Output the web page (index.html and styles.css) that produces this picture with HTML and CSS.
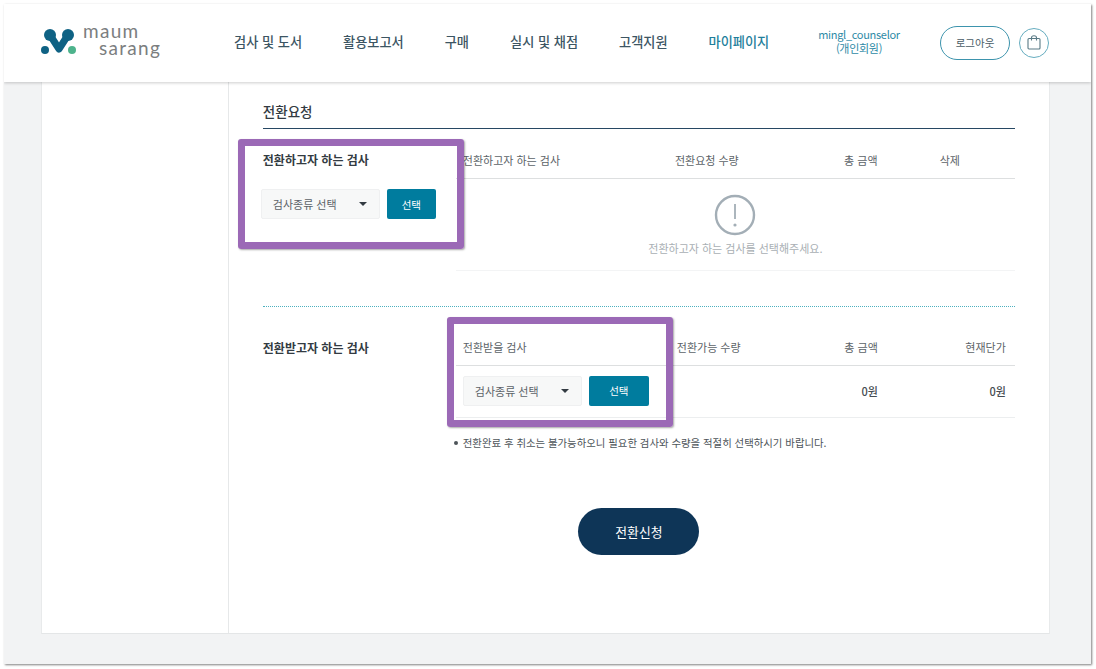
FILE: index.html
```html
<!DOCTYPE html>
<html lang="ko">
<head>
    <meta charset="utf-8">
    <title>전환요청</title>
    <link rel="stylesheet" href="styles.css">
</head>
<body>
    <div class="window">
        <header class="header">
            <a class="logo">
                <svg class="logo-mark" width="36" height="28" viewBox="0 0 36 28">
                    <path d="M10 6 L19 20 L28 6" fill="none" stroke="#0f6284" stroke-width="7" stroke-linecap="round" stroke-linejoin="round"/>
                    <circle cx="10" cy="6" r="6" fill="#0f6284"/>
                    <circle cx="28" cy="6" r="6" fill="#0f6284"/>
                    <circle cx="5" cy="21" r="4" fill="#0f6284"/>
                    <circle cx="32" cy="21" r="4" fill="#4db38c"/>
                </svg>
                <div class="logo-text">
                    <div>maum</div>
                    <div class="logo-second">sarang</div>
                </div>
            </a>
            <nav class="nav">
                <a>검사 및 도서</a>
                <a>활용보고서</a>
                <a>구매</a>
                <a>실시 및 채점</a>
                <a>고객지원</a>
                <a class="active">마이페이지</a>
            </nav>
            <div class="user">mingl_counselor<br>(개인회원)</div>
            <button class="logout">로그아웃</button>
            <button class="cart">
                <svg width="14" height="15" viewBox="0 0 14 15" fill="none" stroke="#5a7a85" stroke-width="1.1">
                    <rect x="1" y="3.5" width="12" height="10.5" rx="1"/>
                    <path d="M4.5 5.5 V2.8 a2.5 2 0 0 1 5 0 V5.5"/>
                </svg>
            </button>
        </header>

        <div class="page">
            <div class="card">
                <aside class="sidebar"></aside>
                <main class="content">
                    <h2 class="section-title">전환요청</h2>

                    <section class="row row-from">
                        <div class="picker">
                            <h3 class="row-label">전환하고자 하는 검사</h3>
                            <div class="select-line">
                                <div class="select">검사종류 선택<span class="caret"></span></div>
                                <button class="pick pick-small">선택</button>
                            </div>
                        </div>
                        <div class="table">
                            <div class="thead thead-from">
                                <div>전환하고자 하는 검사</div>
                                <div class="center">전환요청 수량</div>
                                <div class="center">총 금액</div>
                                <div class="center">삭제</div>
                            </div>
                            <div class="empty">
                                <svg width="42" height="42" viewBox="0 0 42 42" fill="none" stroke="#a3aeb6">
                                    <circle cx="21" cy="21" r="19" stroke-width="2.4"/>
                                    <path d="M21 10 V25" stroke-width="1.8"/>
                                    <circle cx="21" cy="31" r="1.6" fill="#a3aeb6" stroke="none"/>
                                </svg>
                                <p>전환하고자 하는 검사를 선택해주세요.</p>
                            </div>
                        </div>
                    </section>

                    <section class="row row-to">
                        <h3 class="row-label">전환받고자 하는 검사</h3>
                        <div class="table">
                            <div class="thead thead-to">
                                <div>전환받을 검사</div>
                                <div class="nowrap">전환가능 수량</div>
                                <div class="right">총 금액</div>
                                <div class="right">현재단가</div>
                            </div>
                            <div class="tbody thead-to">
                                <div class="select-line">
                                    <div class="select">검사종류 선택<span class="caret"></span></div>
                                    <button class="pick">선택</button>
                                </div>
                                <div></div>
                                <div class="right amount">0원</div>
                                <div class="right amount">0원</div>
                            </div>
                            <p class="note">전환완료 후 취소는 불가능하오니 필요한 검사와 수량을 적절히 선택하시기 바랍니다.</p>
                        </div>
                    </section>

                    <div class="actions">
                        <button class="submit">전환신청</button>
                    </div>
                </main>
            </div>
        </div>

        <div class="highlight highlight-from"></div>
        <div class="highlight highlight-to"></div>
    </div>
</body>
</html>
```

FILE: styles.css
```css
* {
    box-sizing: border-box;
}
body {
    height: 669px;
    margin: 0;
    padding: 4px 0 0 4px;
    background-color: #ffffff;
    font-family: "Noto Sans CJK KR", "Noto Sans", sans-serif;
    color: #333b42;
}
button {
    font-family: inherit;
    cursor: pointer;
}
.window {
    position: relative;
    width: 1087px;
    height: 660px;
    background-color: #f2f3f4;
    box-shadow: 1px 1px 2px rgba(0, 0, 0, 0.5);
    overflow: hidden;
}
.header {
    position: relative;
    z-index: 1;
    display: flex;
    align-items: center;
    height: 78px;
    padding-left: 36px;
    background-color: #ffffff;
    box-shadow: 0 1px 3px rgba(0, 0, 0, 0.2);
}
.logo {
    display: flex;
    align-items: flex-start;
    width: 194px;
}
.logo-mark {
    margin-top: 0;
}
.logo-text {
    margin-left: 7px;
    margin-top: -7px;
    font-family: "Lato", sans-serif;
    font-size: 19px;
    line-height: 17px;
    letter-spacing: 1.3px;
    color: #7b7e80;
}
.logo-second {
    margin-left: 16px;
}
.nav {
    display: flex;
    gap: 41px;
    width: 575px;
    margin-bottom: 4px;
    font-size: 13.2px;
    font-weight: 500;
    color: #3c5563;
}
.nav .active {
    color: #1f7f9c;
}
.user {
    width: 100px;
    margin-bottom: 4px;
    text-align: center;
    font-size: 11px;
    line-height: 14px;
    letter-spacing: -0.3px;
    color: #2e8aa6;
}
.logout {
    width: 70px;
    height: 34px;
    margin-left: 31px;
    margin-bottom: 1px;
    padding: 0;
    border: 1px solid #3d94ad;
    border-radius: 17px;
    background-color: #ffffff;
    font-size: 10.5px;
    color: #4a5c66;
}
.cart {
    display: flex;
    align-items: center;
    justify-content: center;
    width: 30px;
    height: 30px;
    margin-left: 9px;
    margin-bottom: 1px;
    padding: 0;
    border: 1px solid #66adc0;
    border-radius: 50%;
    background-color: #ffffff;
}
.page {
    height: 582px;
    padding: 0 41px 30px 37px;
}
.card {
    display: flex;
    height: 552px;
    background-color: #ffffff;
    border-right: 1px solid #e8eaeb;
    border-bottom: 1px solid #e4e6e7;
    border-left: 1px solid #e8eaeb;
}
.sidebar {
    width: 187px;
    border-right: 1px solid #e6e8e9;
}
.content {
    width: 821px;
    padding: 17px 34px 0 34px;
}
.section-title {
    height: 30px;
    margin: 0;
    border-bottom: 1px solid #274863;
    font-size: 13.5px;
    font-weight: 500;
    line-height: 24px;
    color: #333b42;
}
.row {
    display: flex;
}
.row-from {
    height: 178px;
    border-bottom: 1px dotted #4db0bf;
}
.row-label {
    width: 193px;
    margin: 0;
    font-size: 12px;
    font-weight: 700;
    line-height: 18px;
    color: #333b42;
}
.picker {
    width: 193px;
    padding-top: 22px;
}
.picker .row-label {
    margin-bottom: 20px;
}
.picker .select-line {
    margin-left: -2px;
}
.table {
    flex: 1;
}
.thead {
    display: grid;
    align-items: center;
    height: 38px;
    margin-top: 12px;
    padding-left: 7px;
    border-bottom: 1px solid #dddfe0;
    font-size: 11px;
    color: #5c6368;
}
.thead-from {
    grid-template-columns: 163px 162px 146px 32px;
}
.thead-to {
    grid-template-columns: 214px 62px 139px 128px;
}
.center {
    text-align: center;
}
.right {
    text-align: right;
}
.nowrap {
    white-space: nowrap;
}
.empty {
    display: flex;
    flex-direction: column;
    align-items: center;
    height: 92px;
    padding-top: 15px;
    border-bottom: 1px solid #f3f4f5;
}
.empty p {
    margin: 5px 0 0;
    font-size: 11px;
    line-height: 14px;
    color: #a9afb4;
}
.row-to {
    padding-top: 32px;
}
.row-to .thead {
    margin-top: -11px;
}
.tbody {
    display: grid;
    align-items: center;
    height: 52px;
    padding-bottom: 2px;
    padding-left: 7px;
    border-bottom: 1px solid #eceeef;
}
.select-line {
    display: flex;
    gap: 7px;
}
.select {
    position: relative;
    width: 119px;
    height: 30px;
    padding-left: 11px;
    border: 1px solid #eff0f1;
    border-radius: 2px;
    background-color: #f7f8f8;
    font-size: 11px;
    line-height: 28px;
    color: #5c6368;
}
.caret {
    position: absolute;
    top: 12px;
    right: 12px;
    border-top: 4px solid #333b42;
    border-right: 4px solid transparent;
    border-left: 4px solid transparent;
}
.pick {
    width: 60px;
    height: 30px;
    padding: 0;
    border: none;
    border-radius: 2px;
    background-color: #007c9e;
    font-size: 10.5px;
    color: #ffffff;
}
.pick-small {
    width: 49px;
}
.amount {
    font-size: 11px;
    font-weight: 500;
    color: #454c52;
}
.note {
    position: relative;
    margin: 17px 0 0;
    padding-left: 7px;
    font-size: 10.4px;
    line-height: 16px;
    white-space: nowrap;
    color: #4d5459;
}
.note::before {
    content: "";
    position: absolute;
    top: 6px;
    left: -2px;
    width: 4px;
    height: 4px;
    border-radius: 50%;
    background-color: #4d5459;
}
.actions {
    display: flex;
    justify-content: center;
    margin-top: 57px;
}
.submit {
    width: 121px;
    height: 47px;
    border: none;
    border-radius: 24px;
    background-color: #0e3557;
    font-size: 12.8px;
    font-weight: 400;
    color: #ffffff;
}
.highlight {
    position: absolute;
    border: 7px solid #9b69b6;
    border-radius: 3px;
    box-shadow: 1px 1px 2px rgba(0, 0, 0, 0.35);
}
.highlight-from {
    top: 135px;
    left: 234px;
    width: 226px;
    height: 110px;
}
.highlight-to {
    top: 313px;
    left: 443px;
    width: 226px;
    height: 110px;
}
```
